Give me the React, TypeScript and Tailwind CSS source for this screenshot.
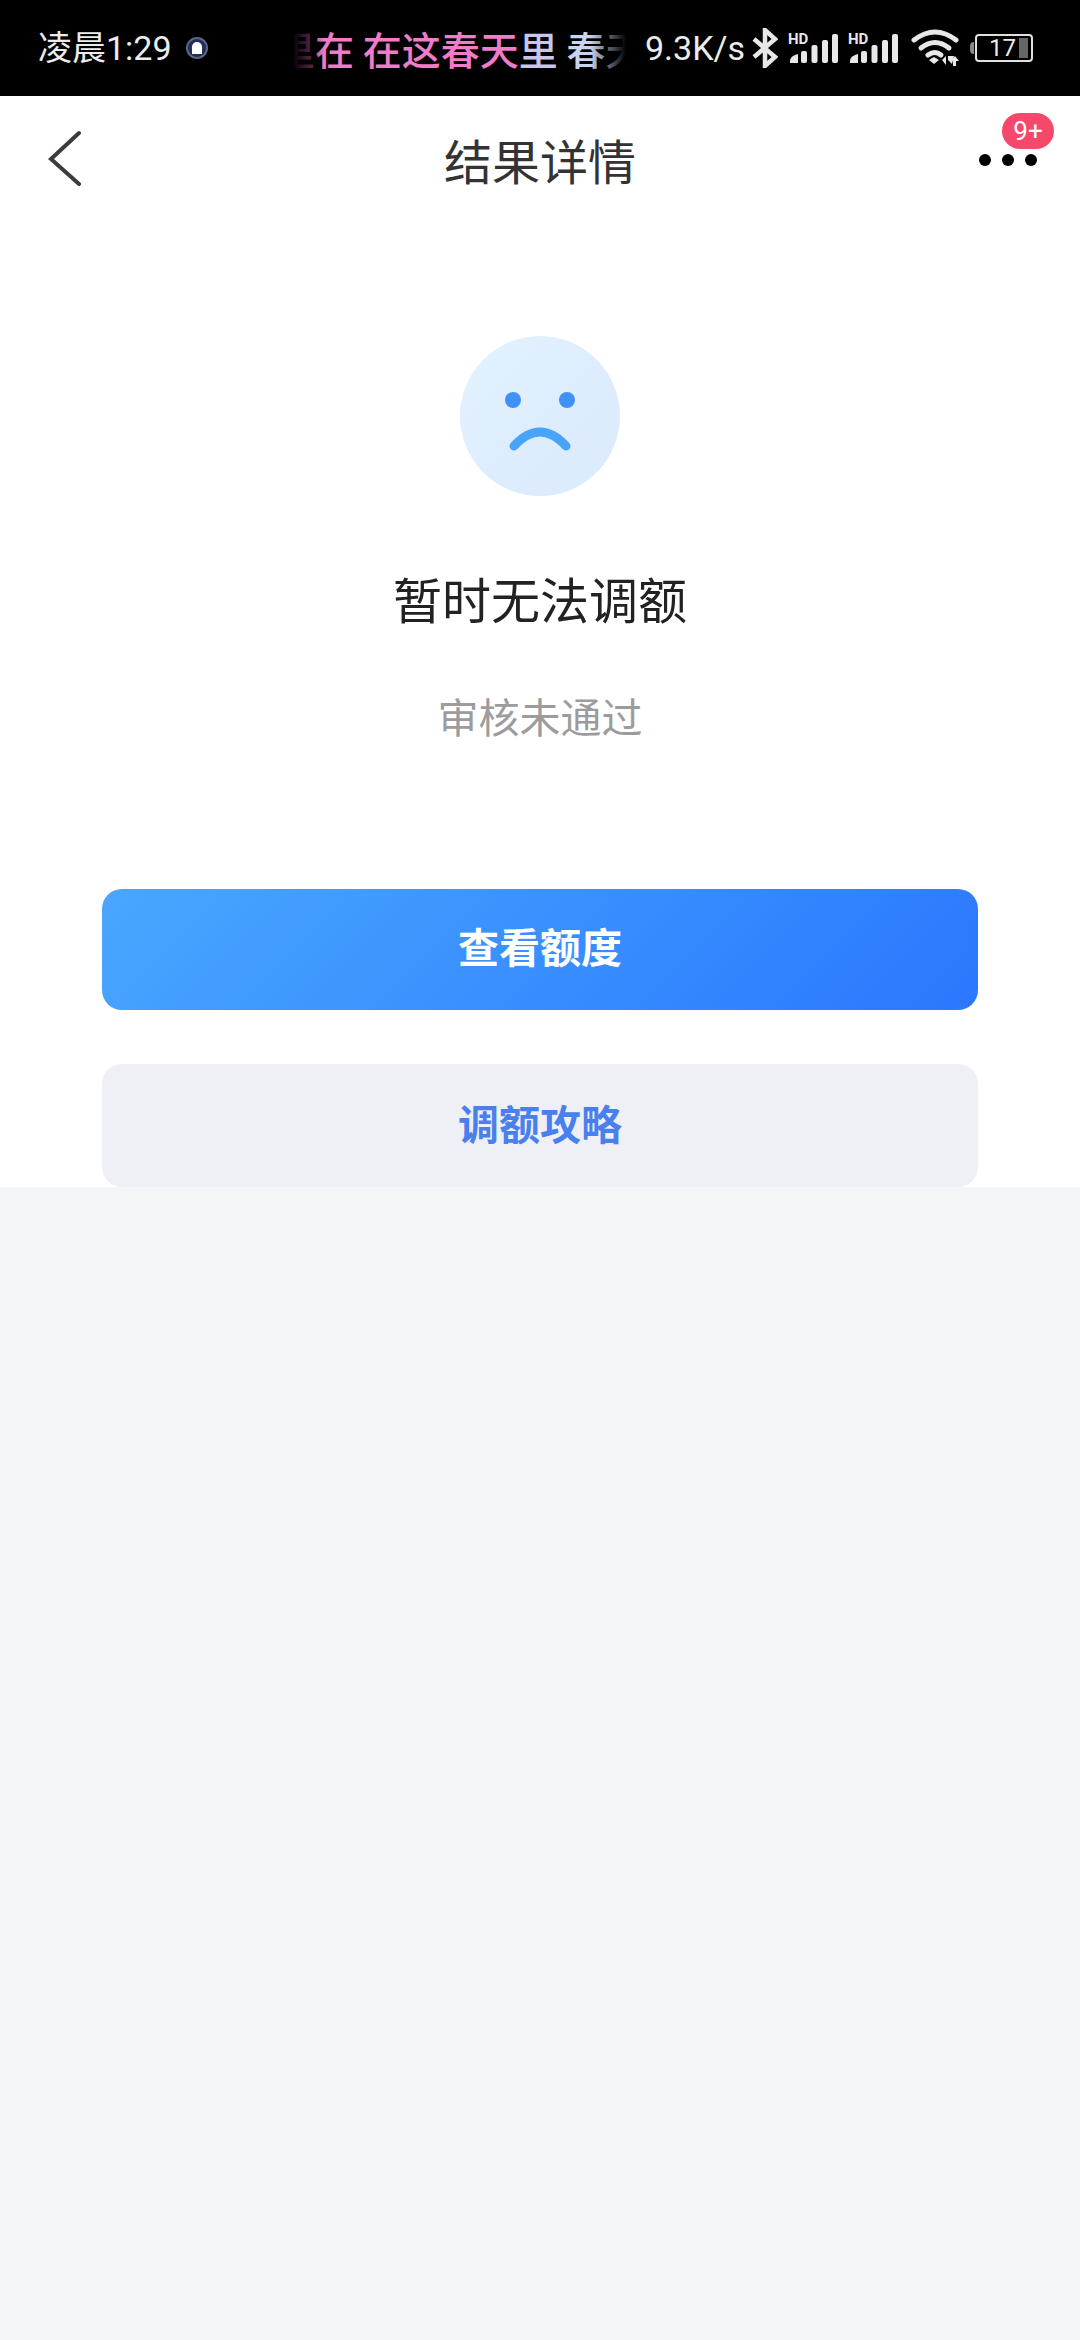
import React from 'react';

const cjk = "font-['Noto_Sans_CJK_SC','Noto_Sans',sans-serif]";
const latin = "font-['Roboto','Noto_Sans_CJK_SC',sans-serif]";

function SignalIcon() {
    return (
        <svg width="50" height="32" viewBox="0 0 50 32" fill="#e8e8e8">
            <text x="0" y="12" fontSize="15" fontWeight="700" fontFamily="Roboto, sans-serif">HD</text>
            <path d="M2 31v-2q0-4 5-6l3-1v9z" />
            <rect x="13" y="19" width="6" height="12" rx="2" />
            <rect x="23.5" y="13" width="6" height="18" rx="2" />
            <rect x="34" y="8" width="6" height="23" rx="2" />
            <rect x="44" y="2" width="6" height="29" rx="2" />
        </svg>
    );
}

function StatusBar() {
    return (
        <div className={`h-24 bg-black flex items-center text-[#ececec] ${latin}`}>
            <span className="ml-[38px] w-[136px] text-[34px] leading-none whitespace-nowrap">凌晨1:29</span>
            {/* QQ 通知图标 */}
            <div className="ml-[12px] w-[22px] h-[22px] rounded-full bg-[radial-gradient(circle,#3a4a80,#141a33)] border-2 border-[#59678c] flex items-center justify-center">
                <div className="w-[10px] h-[12px] rounded-t-full rounded-b-sm bg-white" />
            </div>
            {/* 歌词滚动 */}
            <div className="ml-[84px] w-[334px] h-12 overflow-hidden relative">
                <div className={`flex text-[39px] leading-[48px] font-medium whitespace-pre -ml-[16px] ${cjk}`}>
                    <span className="text-[#8a3d75]">里</span>
                    <span className="text-[#ee7cc8]">在 在这春天</span>
                    <span className="text-[#c9c5ec]">里 </span>
                    <span className="text-[#c9d4ee]">春天</span>
                </div>
                <div className="absolute left-0 top-0 w-8 h-12 bg-gradient-to-r from-black to-transparent" />
                <div className="absolute right-0 top-0 w-9 h-12 bg-gradient-to-l from-black to-transparent" />
            </div>
            <span className="ml-[19px] w-[99px] text-[34px] leading-none whitespace-nowrap">9.3K/s</span>
            <svg className="ml-[8px]" width="26" height="40" viewBox="0 0 26 40" fill="none" stroke="#e8e8e8" strokeWidth="4.5">
                <path d="M2 11l21 18-10 9V2l10 9L2 29" />
            </svg>
            <div className="ml-[10px]"><SignalIcon /></div>
            <div className="ml-[10px]"><SignalIcon /></div>
            <svg className="ml-[13px]" width="48" height="38" viewBox="0 0 48 38" fill="none" stroke="#e8e8e8" strokeWidth="5" strokeLinecap="round">
                <path d="M3 11q21-16 42 0" />
                <path d="M10 19q14-11 28 0" />
                <path d="M17 26q7-5 13 0" />
                <path d="M18 31l5-3 5 3-5 4z" fill="#e8e8e8" stroke="none" />
                <path d="M31 31l4-4v9zM41 35l-4-4v-4h6v0z" fill="#e8e8e8" stroke="none" />
                <path d="M44 27l4 5h-3v5h-3v-5h-2z" fill="#e8e8e8" stroke="none" />
            </svg>
            <div className="ml-[11px] w-1 h-3 bg-[#8a8a8a] rounded-l-sm" />
            <div className="w-[58px] h-[28px] ml-[1px] border-2 border-[#e0e0e0] rounded-[4px] flex items-center">
                <span className="ml-[12px] w-[30px] text-[24px] leading-none">17</span>
                <div className="w-[9px] h-[20px] bg-[#666]" />
            </div>
        </div>
    );
}

function NavBar() {
    return (
        <div className="h-[122px] relative flex items-center justify-center">
            <svg className="absolute left-[46px] top-[34px]" width="36" height="56" viewBox="0 0 36 56" fill="none" stroke="#3c3c3c" strokeWidth="4" strokeLinecap="round">
                <path d="M33 3L5 29l28 25" />
            </svg>
            <h1 className="text-[48px] leading-none text-[#333] font-normal mt-1">结果详情</h1>
            <div className="absolute left-[979px] top-[58px] flex gap-[11px]">
                <div className="w-3 h-3 rounded-full bg-black" />
                <div className="w-3 h-3 rounded-full bg-black" />
                <div className="w-3 h-3 rounded-full bg-black" />
            </div>
            <div className="absolute left-[1002px] top-[17px] w-[52px] h-9 rounded-full bg-[#f5486a] flex items-center justify-center text-white text-[26px] leading-none font-['Roboto',sans-serif]">9+</div>
        </div>
    );
}

export default function App() {
    return (
        <div className={`w-[1080px] h-[2340px] bg-[#f4f5f7] overflow-hidden ${cjk}`}>
            <StatusBar />
            <div className="bg-white h-[1091px] flex flex-col">
                <NavBar />
                <div className="flex flex-col items-center">
                    <div className="mt-[118px] w-40 h-40 rounded-full bg-gradient-to-br from-[#e2f2fe] to-[#dbe9fd] flex items-center justify-center">
                        <svg width="160" height="160" viewBox="0 0 160 160" fill="none">
                            <circle cx="53" cy="64" r="8" fill="#3f91f8" />
                            <circle cx="107" cy="64" r="8" fill="#3f91f8" />
                            <path d="M54 110q26-28 52 0" stroke="#48a4f8" strokeWidth="9" strokeLinecap="round" />
                        </svg>
                    </div>
                    <p className="mt-[77px] text-[49px] leading-none text-[#222]">暂时无法调额</p>
                    <p className="mt-[73px] text-[41px] leading-none text-[#9c9c9c]">审核未通过</p>
                </div>
                <div className="mt-[153px] mx-[102px] flex flex-col gap-[54px]">
                    <button className="h-[121px] pb-[8px] rounded-[20px] bg-linear-135 from-[#4ba6fe] to-[#2b77fe] text-white text-[41px] font-bold leading-none">查看额度</button>
                    <button className="h-[123px] pb-[6px] rounded-[20px] bg-[#eff0f6] text-[#4a80ee] text-[41px] font-bold leading-none">调额攻略</button>
                </div>
            </div>
        </div>
    );
}
